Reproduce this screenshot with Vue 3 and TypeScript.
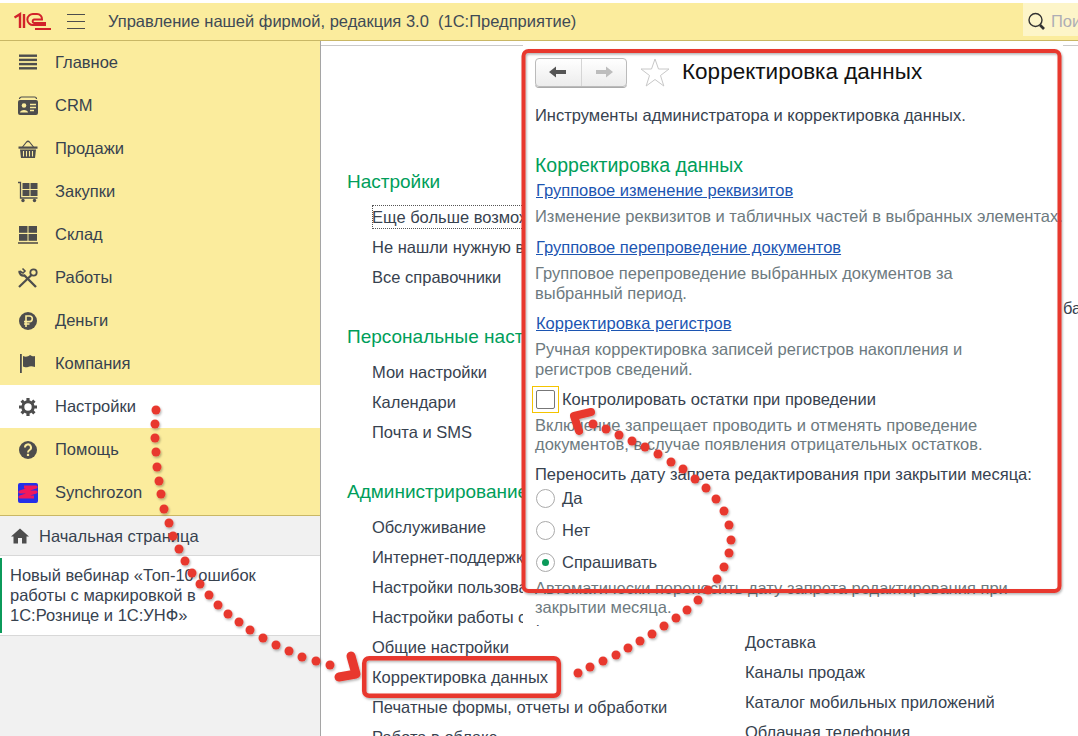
<script setup lang="ts">
const navItems = [
  { label: 'Главное', icon: 'main' },
  { label: 'CRM', icon: 'crm' },
  { label: 'Продажи', icon: 'sales' },
  { label: 'Закупки', icon: 'buy' },
  { label: 'Склад', icon: 'stock' },
  { label: 'Работы', icon: 'works' },
  { label: 'Деньги', icon: 'money' },
  { label: 'Компания', icon: 'company' },
  { label: 'Настройки', icon: 'gear' },
  { label: 'Помощь', icon: 'help' },
  { label: 'Synchrozon', icon: 'sync' },
]
const groups = [
  { title: 'Настройки', items: ['Еще больше возможностей', 'Не нашли нужную возможность?', 'Все справочники'] },
  { title: 'Персональные настройки', items: ['Мои настройки', 'Календари', 'Почта и SMS'] },
  {
    title: 'Администрирование',
    items: ['Обслуживание', 'Интернет-поддержка', 'Настройки пользователей', 'Настройки работы с файлами', 'Общие настройки', 'Корректировка данных', 'Печатные формы, отчеты и обработки', 'Работа в облаке'],
  },
]
const rightItems = ['Доставка', 'Каналы продаж', 'Каталог мобильных приложений', 'Облачная телефония']
const dots: number[][] = [
  [156,410],[155,424],[155,438],[156,452],[157,467],[159,481],[161,494],[164,509],[169,523],[173,536],[179,549],[185,561],[192,573],[200,584],[209,595],[218,605],[228,614],[239,622],[250,630],[263,638],[276,645],[289,651],[302,657],[316,661],[330,665],
  [578,673],[590,667],[603,661],[616,655],[628,648],[640,641],[652,634],[664,626],[676,618],[687,610],[698,600],[708,590],[717,579],[724,567],[729,553],[731,540],[729,525],[724,511],[716,499],[706,488],[695,479],[683,469],[671,462],[658,454],[645,447],[632,441],[619,435],[606,429],[593,424],
]
</script>

<template>
  <div class="page">
    <header class="topbar">
      <svg class="logo" width="38" height="19" viewBox="0 0 38 19">
        <path d="M0.5 5.500 L6 2.200 V16" fill="none" stroke="#d2232a" stroke-width="2.400" />
        <path d="M10 2 V16" fill="none" stroke="#d2232a" stroke-width="2.400" />
        <path d="M32 13 H20 A5.600 5.600 0 1 1 20 2 H23 A5 5 0 0 1 28 7.500 H20 A1.800 1.800 0 0 0 20 11 H32" fill="none" stroke="#d2232a" stroke-width="2" />
        <path d="M21 17 H37" stroke="#d2232a" stroke-width="2" />
      </svg>
      <span class="burger"><i></i><i></i><i></i></span>
      <span class="apptitle">Управление нашей фирмой, редакция 3.0 &nbsp;(1С:Предприятие)</span>
      <div class="search">
        <svg width="20" height="20" viewBox="0 0 20 20">
          <circle cx="8.500" cy="9" r="6.500" fill="none" stroke="#333" stroke-width="1.400" />
          <path d="M13 14 L17 18" stroke="#333" stroke-width="2.600" />
        </svg>
        <span>Поиск</span>
      </div>
    </header>

    <div class="body">
      <aside class="sidebar">
        <nav class="nav">
          <div v-for="n in navItems" :key="n.label" class="nav-item" :class="{ active: n.icon === 'gear' }">
            <svg class="ico" width="22" height="22" viewBox="0 0 22 22">
              <g v-if="n.icon === 'main'" fill="#4d4d4d">
                <rect x="2" y="2.500" width="18" height="2.400" /><rect x="2" y="6.700" width="18" height="2.400" /><rect x="2" y="10.900" width="18" height="2.400" /><rect x="2" y="15.100" width="18" height="2.400" />
              </g>
              <g v-else-if="n.icon === 'crm'">
                <path d="M2.500 4 A2 2 0 0 1 4.500 2 H17.500 A2 2 0 0 1 19.500 4" fill="none" stroke="#4d4d4d" stroke-width="1.200" />
                <rect x="1" y="5" width="20" height="15" rx="2" fill="#4d4d4d" />
                <circle cx="7" cy="10.500" r="2.300" fill="#fbec9d" />
                <path d="M3 17.500 C3 14 11 14 11 17.500 Z" fill="#fbec9d" />
                <path d="M13 9.500 H19 M13 12.500 H19 M13 15.500 H17" stroke="#fbec9d" stroke-width="1.300" />
              </g>
              <g v-else-if="n.icon === 'sales'" fill="#4d4d4d">
                <path d="M5.500 9 L9.500 4 M16.500 9 L12.500 4 M9.500 4 Q11 2.500 12.500 4" fill="none" stroke="#4d4d4d" stroke-width="1.200" />
                <rect x="1.500" y="8.500" width="19" height="2.200" />
                <path d="M3 11.500 H19 L18 20 H4 Z" />
                <path d="M6.500 13 V18.500 M9.500 13 V18.500 M12.500 13 V18.500 M15.500 13 V18.500" stroke="#fbec9d" stroke-width="1.100" />
              </g>
              <g v-else-if="n.icon === 'buy'" fill="#4d4d4d">
                <path d="M1 1.500 H3.500 V17 H20.500" fill="none" stroke="#4d4d4d" stroke-width="1.300" />
                <rect x="5.500" y="2" width="7" height="6" /><rect x="13.500" y="2" width="7" height="6" /><rect x="5.500" y="9" width="7" height="6" /><rect x="13.500" y="9" width="7" height="6" />
                <circle cx="6" cy="19.500" r="1.700" /><circle cx="17.500" cy="19.500" r="1.700" />
              </g>
              <g v-else-if="n.icon === 'stock'" fill="#4d4d4d">
                <rect x="2" y="2" width="8.500" height="6.800" /><rect x="11.500" y="2" width="8.500" height="6.800" /><rect x="2" y="10" width="8.500" height="6.800" /><rect x="11.500" y="10" width="8.500" height="6.800" />
                <rect x="1" y="18" width="20" height="2" fill="#77705a" />
              </g>
              <g v-else-if="n.icon === 'works'" fill="none" stroke="#4d4d4d">
                <path d="M2 20 L15 7.500" stroke-width="2.200" />
                <path d="M2.500 4 A4 4 0 0 0 7.500 8.500 L19 20" stroke-width="2.400" />
                <path d="M2.500 4 L6 6 L8 4 L5.500 1.500" stroke-width="1.600" />
                <circle cx="16.500" cy="5.500" r="3.200" stroke-width="1.800" />
              </g>
              <g v-else-if="n.icon === 'money'">
                <circle cx="11" cy="11" r="9" fill="#4d4d4d" />
                <path d="M9 17 V6 H12.500 A2.800 2.800 0 0 1 12.500 11.600 H7 M7 14 H12.500" fill="none" stroke="#fbec9d" stroke-width="1.600" />
              </g>
              <g v-else-if="n.icon === 'company'" fill="#4d4d4d">
                <rect x="3" y="1" width="1.800" height="19" />
                <path d="M6 3 C9 4.500 11 3.500 13 2 C15 3.500 17 3.500 18 3 V14 C15 13 13 13 11 14 C9 14.500 7 14 6 13.500 Z" />
              </g>
              <g v-else-if="n.icon === 'gear'">
                <circle cx="11" cy="11" r="5.200" fill="none" stroke="#4d4d4d" stroke-width="3" />
                <path d="M11 2 V5 M11 17 V20 M2 11 H5 M17 11 H20 M4.600 4.600 L6.800 6.800 M15.200 15.200 L17.400 17.400 M4.600 17.400 L6.800 15.200 M15.200 6.800 L17.400 4.600" stroke="#4d4d4d" stroke-width="3.200" />
              </g>
              <g v-else-if="n.icon === 'help'">
                <circle cx="11" cy="11" r="9" fill="#4d4d4d" />
                <path d="M8 8.500 A3 3 0 1 1 12.500 11 C11.300 11.700 11 12 11 13.500" fill="none" stroke="#fbec9d" stroke-width="2" />
                <rect x="9.900" y="14.800" width="2.200" height="2.200" fill="#fbec9d" />
              </g>
              <g v-else>
                <rect x="1" y="1" width="20" height="20" rx="2" fill="#2430e8" />
                <path d="M7 5 H19 L3 10 H19 L3 15 H17" fill="none" stroke="#f0185c" stroke-width="3.200" stroke-linejoin="round" />
              </g>
            </svg>
            <span>{{ n.label }}</span>
          </div>
        </nav>
        <div class="home">
          <svg width="18" height="16" viewBox="0 0 18 16"><path d="M9 0.500 L18 8.500 H15.500 V15.500 H11 V10 H7 V15.500 H2.500 V8.500 H0 Z" fill="#4d4d4d" /></svg>
          <span>Начальная страница</span>
        </div>
        <div class="news">
          <div class="news-inner">Новый вебинар «Топ-10 ошибок работы с маркировкой в 1С:Рознице и 1С:УНФ»</div>
        </div>
      </aside>

      <main class="content">
        <div class="col-left">
          <section v-for="g in groups" :key="g.title" class="group">
            <h3>{{ g.title }}</h3>
            <a v-for="i in g.items" :key="i" class="item" :class="{ first: i === 'Еще больше возможностей' }">{{ i }}</a>
          </section>
        </div>
        <div class="col-right">
          <a v-for="i in rightItems" :key="i" class="item">{{ i }}</a>
        </div>
        <span class="stray">бан</span>
      </main>
    </div>

    <section class="panel">
      <div class="panel-head">
        <div class="navbtns">
          <span class="nb">
            <svg width="18" height="12" viewBox="0 0 18 12"><path d="M0 6 L7 0.500 V4 H17 V8 H7 V11.500 Z" fill="#555" /></svg>
          </span>
          <span class="nb">
            <svg width="18" height="12" viewBox="0 0 18 12"><path d="M18 6 L11 0.500 V4 H1 V8 H11 V11.500 Z" fill="#bdbdbd" /></svg>
          </span>
        </div>
        <svg class="star" width="30" height="29" viewBox="0 0 30 29"><path d="M15 1 L18.500 11 H29 L20.500 17.500 L23.800 28 L15 21.500 L6.200 28 L9.500 17.500 L1 11 H11.500 Z" fill="#fff" stroke="#c8c8c8" stroke-width="1" /></svg>
        <h1>Корректировка данных</h1>
      </div>
      <p class="lead">Инструменты администратора и корректировка данных.</p>
      <h2>Корректировка данных</h2>
      <a class="link">Групповое изменение реквизитов</a>
      <p class="hint one">Изменение реквизитов и табличных частей в выбранных элементах.</p>
      <a class="link l2">Групповое перепроведение документов</a>
      <p class="hint">Групповое перепроведение выбранных документов за<br />выбранный период.</p>
      <a class="link l3">Корректировка регистров</a>
      <p class="hint">Ручная корректировка записей регистров накопления и<br />регистров сведений.</p>
      <label class="check">
        <span class="cbfocus"><span class="cb"></span></span>
        <span>Контролировать остатки при проведении</span>
      </label>
      <p class="hint h4">Включение запрещает проводить и отменять проведение<br />документов, в случае появления отрицательных остатков.</p>
      <p class="q">Переносить дату запрета редактирования при закрытии месяца:</p>
      <div class="radios">
        <div class="radio"><span class="rb"></span>Да</div>
        <div class="radio"><span class="rb"></span>Нет</div>
        <div class="radio"><span class="rb on"></span>Спрашивать</div>
      </div>
      <p class="hint h5">Автоматически переносить дату запрета редактирования при<br />закрытии месяца.</p>
    </section>

    <svg class="marks" width="1078" height="736" viewBox="0 0 1078 736">
      <defs>
        <filter id="sh" x="-5%" y="-5%" width="110%" height="110%">
          <feDropShadow dx="1" dy="1.500" stdDeviation="0.800" flood-color="#000" flood-opacity="0.3" />
        </filter>
      </defs>
      <g filter="url(#sh)">
        <rect x="523.500" y="51" width="536" height="540" rx="5" fill="none" stroke="#e8392f" stroke-width="4" />
        <rect x="364.200" y="658.200" width="194.600" height="37.600" rx="5" fill="none" stroke="#e8392f" stroke-width="4.500" />
        <circle v-for="(d, i) in dots" :key="i" :cx="d[0]" :cy="d[1]" r="4.500" fill="#e8392f" />
        <path d="M351 656 L356 674 L339 677" fill="none" stroke="#e8392f" stroke-width="9" stroke-linecap="round" stroke-linejoin="round" />
        <path d="M591 412 L574 416 L579 431" fill="none" stroke="#e8392f" stroke-width="8" stroke-linecap="round" stroke-linejoin="round" />
      </g>
    </svg>
  </div>
</template>

<style>
html, body { margin: 0; padding: 0; background: #fff; overflow: hidden; }
</style>

<style scoped>
.page { position: relative; width: 1078px; height: 736px; overflow: hidden; font-family: "Liberation Sans", Arial, sans-serif; font-size: 16.5px; color: #37424f; background: #fff; }
.topbar { margin-top: 3px; height: 37px; background: #fbec9d; border-bottom: 1px solid #c9b765; display: flex; align-items: center; padding-left: 14px; position: relative; }
.logo { flex: none; }
.burger { width: 18px; display: flex; flex-direction: column; gap: 6px; margin-left: 15px; flex: none; }
.burger i { display: block; height: 1px; background: #4d4d4d; }
.apptitle { margin-left: 23px; color: #3f4a55; white-space: nowrap; }
.search { position: absolute; left: 1023px; top: 0; width: 55px; height: 33px; background: #fdf5c9; display: flex; align-items: center; gap: 4px; padding: 3px 0 0 4px; box-sizing: border-box; color: #adadb5; overflow: hidden; white-space: nowrap; }
.search svg { flex: none; }
.body { display: flex; height: 695px; }
.sidebar { width: 320px; flex: none; background: #f1f1f1; border-right: 1px solid #a5a5a5; display: flex; flex-direction: column; }
.nav { background: #fbec9d; border-bottom: 1px solid #c9b765; height: 475px; box-sizing: border-box; }
.nav-item { height: 43px; display: flex; align-items: center; padding-left: 17px; gap: 16px; }
.nav-item.active { background: #fff; }
.ico { flex: none; }
.home { height: 40px; display: flex; align-items: center; padding: 1px 0 0 11px; gap: 10px; border-bottom: 1px solid #d8d8d8; box-sizing: border-box; }
.news { background: #fff; border-bottom: 1px solid #d8d8d8; padding: 2px 0; height: 80px; box-sizing: border-box; }
.news-inner { border-left: 2px solid #0b9a5a; padding: 7px 0 0 8px; height: 75px; line-height: 20px; width: 262px; box-sizing: border-box; }
.content { flex: 1; position: relative; display: flex; padding-left: 26px; border-top: 1px solid #c9c9c9; margin-top: 4px; }
.col-left { width: 398px; flex: none; padding-top: 123px; }
.col-right { padding-top: 581px; display: flex; flex-direction: column; }
.group { margin-bottom: 32px; display: flex; flex-direction: column; }
.group h3 { margin: 0 0 9px; font-size: 19px; font-weight: 400; color: #009e5a; height: 24px; line-height: 26px; white-space: nowrap; }
.item { height: 30px; line-height: 30px; padding-left: 25px; white-space: nowrap; color: #37424f; }
.col-right .item { padding-left: 0; }
.item.first { padding-left: 3px; margin-left: 22px; outline: 1px dotted #555; outline-offset: -4px; }
.stray { position: absolute; left: 742px; top: 253px; color: #37424f; }
.panel { position: absolute; left: 523px; top: 45px; width: 540px; height: 580px; background: #fff; padding: 13px 0 0 12px; box-sizing: border-box; overflow: hidden; }
.panel-head { display: flex; align-items: center; height: 28px; }
.navbtns { display: flex; width: 92px; height: 29px; border: 1px solid #bbb; border-radius: 4px; box-sizing: border-box; background: linear-gradient(#fff, #ececec); box-shadow: 0 1px 0 #aaa; }
.nb { width: 45px; display: flex; align-items: center; justify-content: center; }
.nb + .nb { border-left: 1px solid #d5d5d5; }
.star { margin-left: 13px; flex: none; }
.panel-head h1 { margin: 0 0 0 12px; font-size: 22.500px; font-weight: 400; color: #111; white-space: nowrap; }
.lead { margin: 21px 0 0; height: 17px; line-height: 17px; }
h2 { margin: 31px 0 0; font-size: 19.500px; font-weight: 400; color: #009e5a; height: 21px; line-height: 21px; white-space: nowrap; }
.link { display: block; margin: 6px 0 0 1px; height: 17px; line-height: 17px; color: #1c55b2; text-decoration: underline; }
.l2 { margin-top: 13px; }
.l3 { margin-top: 12px; }
.hint { margin: 7px 0 0; color: #6d7a80; line-height: 20px; white-space: nowrap; }
.check { display: flex; align-items: center; margin-top: 6px; margin-left: -3px; gap: 3px; height: 28px; }
.cbfocus { width: 27px; height: 27px; border: 1px solid #f4c400; box-sizing: border-box; display: flex; align-items: center; justify-content: center; }
.cb { width: 19px; height: 19px; border: 1px solid #777; border-radius: 2px; box-sizing: border-box; }
.hint.h4 { margin-top: 3px; line-height: 19px; }
.q { margin: 10px 0 0; height: 20px; line-height: 20px; white-space: nowrap; }
.radios { margin-top: -2px; }
.radio { display: flex; align-items: center; height: 32px; gap: 7px; }
.rb { width: 19px; height: 19px; border: 1px solid #aaa; border-radius: 50%; box-sizing: border-box; margin-left: 1px; position: relative; background: #fff; }
.rb.on::after { content: ""; position: absolute; left: 5px; top: 5px; width: 7px; height: 7px; border-radius: 50%; background: #0b9a5a; }
.hint.h5 { margin-top: 1px; line-height: 19px; }
.marks { position: absolute; left: 0; top: 0; pointer-events: none; }
</style>
